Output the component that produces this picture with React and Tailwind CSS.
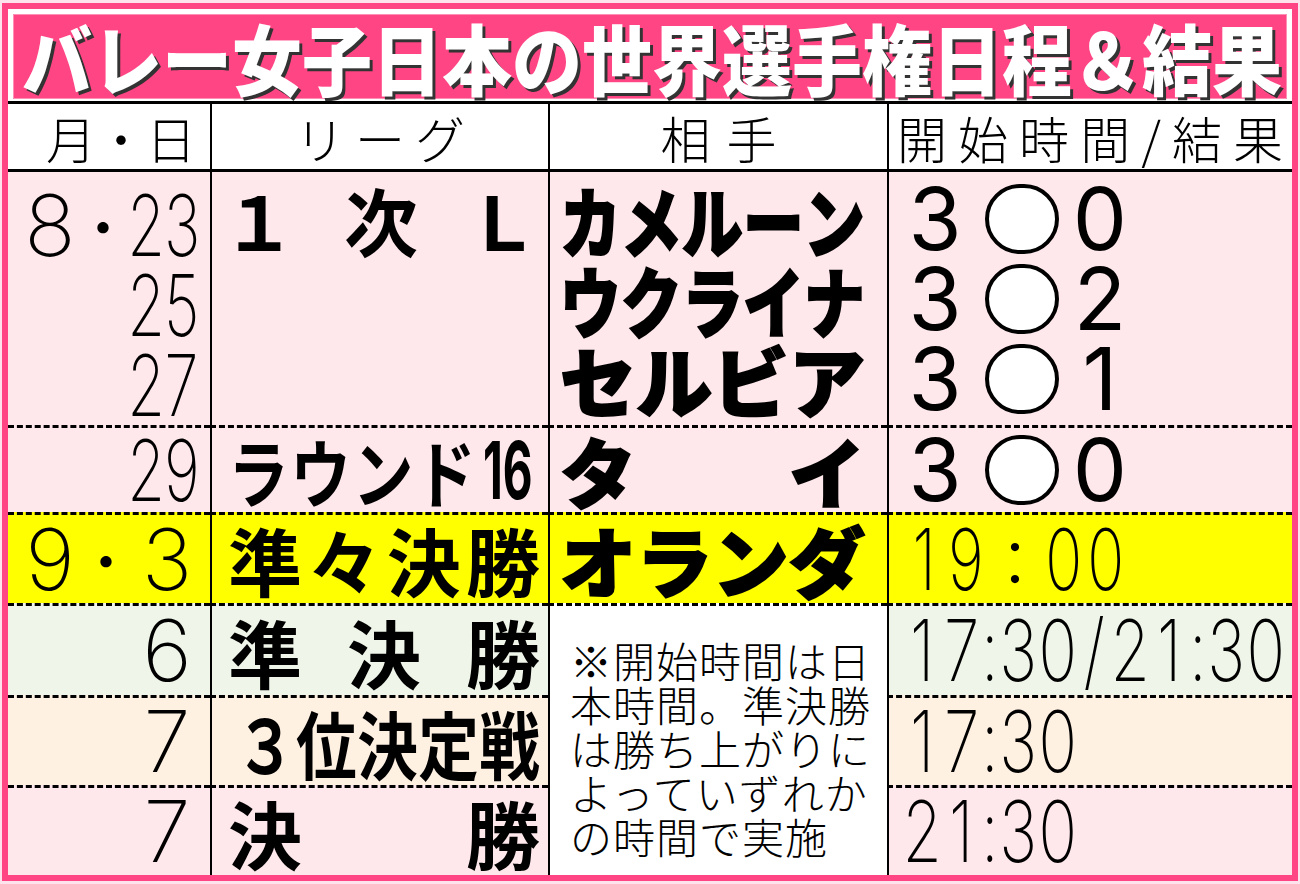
import React from "react";

const JP = "font-['Noto_Sans_CJK_JP',sans-serif]";
const IN = "font-['Inter','Liberation_Sans',sans-serif]";

const pink = "bg-[#ffe8ec]";
const green = "bg-[#eff6e9]";
const orange = "bg-[#fff1e2]";
const yellow = "bg-[#ffff00]";
const dash = "border-t-[3px] [border-top-style:dashed] border-black";
const vl = "border-l-2 border-black";

function Chars({ text }) {
  return [...text].map((c, i) => <span key={i}>{c}</span>);
}

function N({ text, d = "w-[36px]", c = "w-[16px]", sl = "w-[30px]", sc = "scale-x-[0.72]" }) {
  return (
    <span className="inline-flex">
      {[...text].map((ch, i) => {
        const w = ch === ":" ? c : ch === "/" ? sl : d;
        return (
          <span key={i} className={`inline-flex justify-center ${w}`}>
            <span className={`inline-block ${sc}`}>{ch}</span>
          </span>
        );
      })}
    </span>
  );
}

function Dot({ w = "w-[50px]" }) {
  return <span className={`inline-flex justify-center ${w} ${JP} font-light text-[60px]`}>・</span>;
}

function Res({ b }) {
  return (
    <div className={`h-[80px] flex items-center pl-[6px] ${IN} font-normal text-[86px] leading-none`}>
      <span className="inline-flex justify-center w-[80px]">3</span>
      <span className="ml-[10px] w-[74px] h-[70px] rounded-full border-4 border-black bg-white" />
      <span className="inline-flex justify-center w-[80px] ml-[1px]">{b}</span>
    </div>
  );
}

function Kata({ text }) {
  if ([...text].length >= 5) {
    return (
      <div className="w-[381px] shrink-0 origin-left scale-x-[0.8] flex justify-between">
        <Chars text={text} />
      </div>
    );
  }
  return (
    <div className="w-[305px] shrink-0 flex justify-between">
      <Chars text={text} />
    </div>
  );
}

const c1 = `flex items-center justify-end pr-[10px] ${IN} font-extralight text-[85px] leading-none`;
const c2 = `flex items-center pl-[16px] ${JP} font-bold text-[74px] leading-none ${vl}`;
const c3 = `flex items-center pl-[10px] ${JP} font-black text-[76px] leading-none [-webkit-text-stroke:2px_black] ${vl}`;
const c4 = `flex items-center pl-[14px] ${IN} font-extralight text-[85px] leading-none ${vl}`;

export default function App() {
  return (
    <div className="w-[1300px] h-[884px] bg-[#ffe3ec] pt-[3px] pl-[2px]">
      <div className="w-[1296px] h-[878px] border-[6px] border-[#ff4583] bg-white flex flex-col">
        {/* title */}
        <div className="pt-[5px] px-[5px] pb-[2px]">
          <div className="h-[85px] bg-[#ff4583] border border-[#ff90b5] flex items-center px-[8px]">
            <div
              className={`w-full flex justify-between scale-y-[1.1] ${JP} font-black text-[70px] leading-none text-white [text-shadow:3px_3px_0_#333]`}
            >
              <Chars text="バレー女子日本の世界選手権日程＆結果" />
            </div>
          </div>
        </div>

        {/* header */}
        <div
          className={`grid grid-cols-[202px_338px_339px_405px] h-[71px] border-y-[3px] border-black bg-white ${JP} font-light text-[50px] leading-none text-black`}
        >
          <div className="flex items-center justify-end pr-[14px]">
            <span>月・日</span>
          </div>
          <div className={`flex items-center justify-center gap-[10px] ${vl}`}>
            <Chars text="リーグ" />
          </div>
          <div className={`flex items-center justify-center gap-[16px] ${vl}`}>
            <Chars text="相手" />
          </div>
          <div className={`flex items-center justify-between pl-[8px] pr-[9px] ${vl}`}>
            <Chars text="開始時間/結果" />
          </div>
        </div>

        {/* body */}
        <div className="grid grid-cols-[202px_338px_339px_405px] grid-rows-[253px_87px_91px_92px_90px_90px] text-black">
          {/* row 1 */}
          <div className={`${pink} ${c1} flex-col justify-center items-stretch`}>
            <div className="h-[80px] flex items-center justify-end">
              <span className="inline-flex justify-center w-[56px]">8</span>
              <Dot />
              <N text="23" />
            </div>
            <div className="h-[80px] flex items-center justify-end">
              <N text="25" />
            </div>
            <div className="h-[80px] flex items-center justify-end">
              <N text="27" />
            </div>
          </div>
          <div className={`${pink} ${c2} flex-col justify-center items-start`}>
            <div className="h-[80px] flex items-center">
              <div className="w-[318px] -ml-[6px] flex justify-between">
                <span>１</span>
                <span>次</span>
                <span>Ｌ</span>
              </div>
            </div>
            <div className="h-[80px]" />
            <div className="h-[80px]" />
          </div>
          <div className={`${pink} ${c3} flex-col justify-center items-start`}>
            <div className="h-[80px] flex items-center">
              <Kata text="カメルーン" />
            </div>
            <div className="h-[80px] flex items-center">
              <Kata text="ウクライナ" />
            </div>
            <div className="h-[80px] flex items-center">
              <Kata text="セルビア" />
            </div>
          </div>
          <div className={`${pink} flex flex-col justify-center ${vl}`}>
            <Res b="0" />
            <Res b="2" />
            <Res b="1" />
          </div>

          {/* row 2 */}
          <div className={`${pink} ${c1} ${dash}`}>
            <N text="29" />
          </div>
          <div className={`${pink} ${c2} ${dash}`}>
            <div className="w-[378px] shrink-0 origin-left scale-x-[0.82] flex justify-between items-center">
              <Chars text="ラウンド" />
              <span className="inline-flex justify-center w-[74px]">
                <span className={`inline-block scale-x-[0.7] ${IN} font-bold text-[80px]`}>16</span>
              </span>
            </div>
          </div>
          <div className={`${pink} ${c3} ${dash}`}>
            <div className="w-[305px] shrink-0 flex justify-between">
              <span>タ</span>
              <span>イ</span>
            </div>
          </div>
          <div className={`${pink} flex items-center ${vl} ${dash}`}>
            <Res b="0" />
          </div>

          {/* row 3 - yellow */}
          <div className={`${yellow} ${c1} ${dash}`}>
            <span className="inline-flex justify-center w-[56px]">9</span>
            <Dot w="w-[56px]" />
            <span className="inline-flex justify-center w-[66px]">3</span>
          </div>
          <div className={`${yellow} ${c2} ${dash}`}>
            <div className="w-[312px] flex justify-between">
              <Chars text="準々決勝" />
            </div>
          </div>
          <div className={`${yellow} ${c3} ${dash}`}>
            <Kata text="オランダ" />
          </div>
          <div className={`${yellow} ${c4} ${dash}`}>
            <N text="19" d="w-[42px]" />
            <span className={`inline-flex justify-center w-[56px] ${JP} font-light text-[64px]`}>：</span>
            <N text="00" d="w-[42px]" />
          </div>

          {/* row 4 - green */}
          <div className={`${green} ${c1} ${dash}`}>
            <span className="inline-flex justify-center w-[66px]">6</span>
          </div>
          <div className={`${green} ${c2} ${dash}`}>
            <div className="w-[312px] flex justify-between">
              <Chars text="準決勝" />
            </div>
          </div>
          <div
            className={`row-span-3 bg-white ${vl} ${dash} flex flex-col justify-center pl-[20px] pt-[14px] ${JP} font-light text-[42px] leading-[44px] tracking-[1px]`}
          >
            <div>※開始時間は日</div>
            <div>本時間。準決勝</div>
            <div>は勝ち上がりに</div>
            <div>よっていずれか</div>
            <div>の時間で実施</div>
          </div>
          <div className={`${green} ${c4} ${dash} col-start-4`}>
            <N text="17:30/21:30" d="w-[39px]" c="w-[18px]" sl="w-[34px]" sc="scale-x-[0.75]" />
          </div>

          {/* row 5 - orange */}
          <div className={`${orange} ${c1} ${dash}`}>
            <span className="inline-flex justify-center w-[66px]">7</span>
          </div>
          <div className={`${orange} ${c2} ${dash} pl-[23px]`}>
            <div className="w-[372px] shrink-0 origin-left scale-x-[0.82] flex justify-between">
              <Chars text="３位決定戦" />
            </div>
          </div>
          <div className={`${orange} ${c4} ${dash} col-start-4`}>
            <N text="17:30" d="w-[39px]" c="w-[18px]" sc="scale-x-[0.75]" />
          </div>

          {/* row 6 - pink */}
          <div className={`${pink} ${c1} ${dash}`}>
            <span className="inline-flex justify-center w-[66px]">7</span>
          </div>
          <div className={`${pink} ${c2} ${dash}`}>
            <div className="w-[312px] flex justify-between">
              <span>決</span>
              <span>勝</span>
            </div>
          </div>
          <div className={`${pink} ${c4} ${dash} col-start-4 pl-[10px]`}>
            <N text="21:30" d="w-[39px]" c="w-[18px]" sc="scale-x-[0.75]" />
          </div>
        </div>
      </div>
    </div>
  );
}
